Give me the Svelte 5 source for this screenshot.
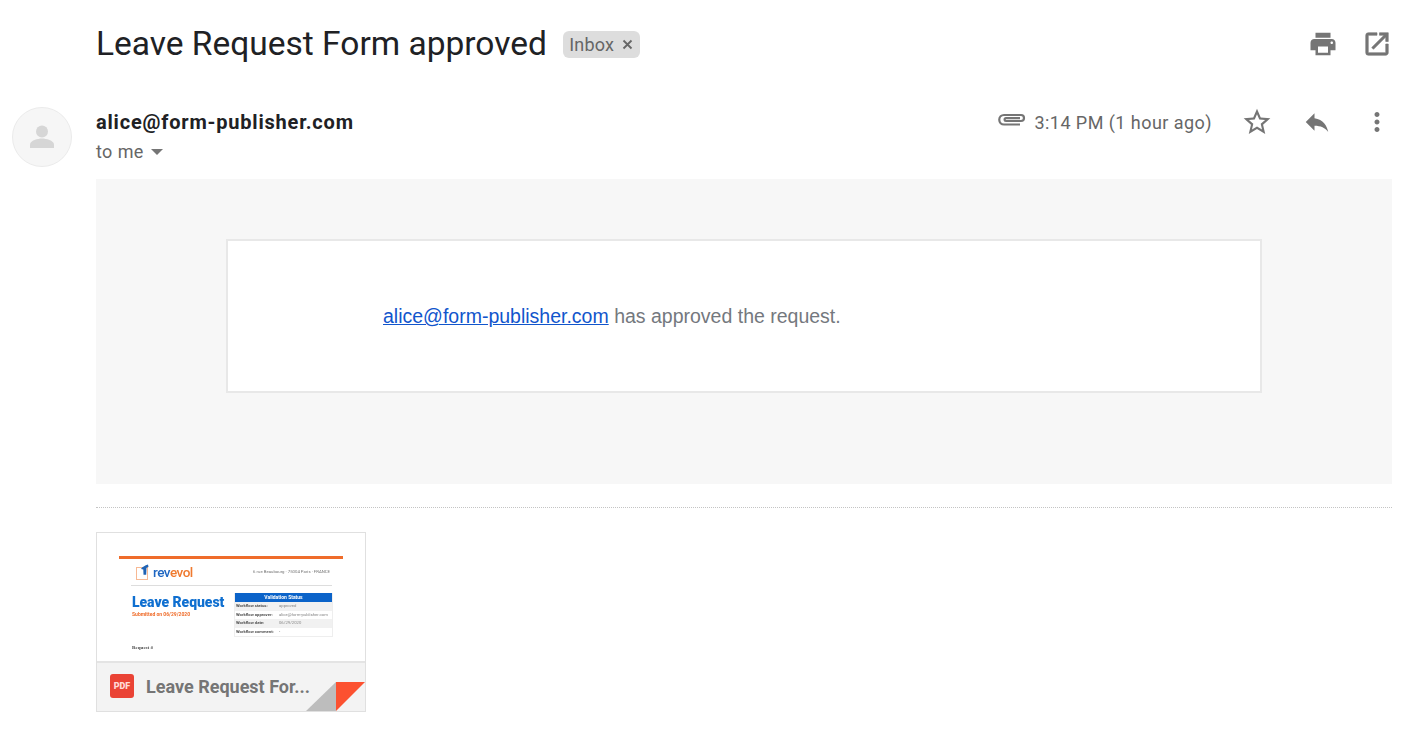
<script>
  const rows = [
    ['Workflow status:', 'approved'],
    ['Workflow approver:', 'alice@form-publisher.com'],
    ['Workflow date:', '06/29/2020'],
    ['Workflow comment:', '-']
  ];
</script>

<div class="page">
  <header class="subject">
    <div class="title">
      <h1>Leave Request Form approved</h1>
      <span class="chip">Inbox
        <svg width="11" height="11" viewBox="0 0 11 11"><path d="M1.500 1.500l8 8M9.500 1.500l-8 8" stroke="#666" stroke-width="1.800" fill="none"/></svg>
      </span>
    </div>
    <div class="subject-actions">
      <svg width="30" height="30" viewBox="0 0 24 24"><path fill="#757575" d="M19 8H5c-1.660 0-3 1.340-3 3v6h4v4h12v-4h4v-6c0-1.660-1.340-3-3-3zm-3 11H8v-5h8v5zm3-7c-.55 0-1-.45-1-1s.45-1 1-1 1 .45 1 1-.45 1-1 1zm-1-9H6v4h12V3z"/></svg>
      <svg width="30" height="30" viewBox="0 0 24 24"><path fill="#757575" stroke="#757575" stroke-width=".5" d="M19 19H5V5h7V3H5a2 2 0 0 0-2 2v14a2 2 0 0 0 2 2h14c1.100 0 2-.9 2-2v-7h-2v7zM14 3v2h3.590l-9.830 9.830 1.410 1.410L19 6.410V10h2V3h-7z"/></svg>
    </div>
  </header>

  <section class="message">
    <div class="avatar">
      <svg width="30" height="30" viewBox="0 0 30 30"><circle cx="15" cy="9.500" r="6" fill="#d6d6d6"/><path fill="#d6d6d6" d="M3 26v-3.500c0-4 8-6 12-6s12 2 12 6V26z"/></svg>
    </div>
    <div class="main">
      <div class="meta">
        <div>
          <div class="sender">alice@form-publisher.com</div>
          <div class="to">to me <span class="caret"></span></div>
        </div>
        <div class="meta-right">
          <svg class="clip" width="30" height="30" viewBox="0 0 30 30"><path fill="none" stroke="#757575" stroke-width="2.200" d="M24 18.500H8A4.750 4.750 0 0 1 8 9H25A3 3 0 0 1 25 15H10A1.400 1.400 0 0 1 10 12.200H24"/></svg>
          <span class="time">3:14 PM (1 hour ago)</span>
          <svg class="star" width="32" height="32" viewBox="0 0 24 24"><path fill="#757575" d="M22 9.240l-7.190-.62L12 2 9.190 8.630 2 9.240l5.460 4.730L5.820 21 12 17.270 18.180 21l-1.630-7.030L22 9.240zM12 15.400l-3.760 2.270 1-4.280-3.320-2.880 4.380-.38L12 6.100l1.710 4.040 4.380.38-3.320 2.880 1 4.280L12 15.400z"/></svg>
          <svg class="reply" width="30" height="30" viewBox="0 0 24 24"><path fill="#757575" d="M10 9V5l-7 7 7 7v-4.100c5 0 8.500 1.600 11 5.100-1-5-4-10-11-11z"/></svg>
          <svg class="more" width="30" height="30" viewBox="0 0 24 24"><path fill="#757575" d="M12 8c1.100 0 2-.9 2-2s-.9-2-2-2-2 .9-2 2 .9 2 2 2zm0 2c-1.100 0-2 .9-2 2s.9 2 2 2 2-.9 2-2-.9-2-2-2zm0 6c-1.100 0-2 .9-2 2s.9 2 2 2 2-.9 2-2-.9-2-2-2z"/></svg>
        </div>
      </div>

      <div class="mail">
        <div class="card">
          <a href="#top">alice@form-publisher.com</a> has approved the request.
        </div>
      </div>

      <hr class="divider" />

      <div class="attachment">
        <div class="preview">
          <div class="doc">
            <div class="bar"></div>
            <div class="brand">
              <div class="logo">
                <svg width="14" height="16" viewBox="0 0 14 16"><rect x=".5" y="3.500" width="11" height="12" fill="#fff" stroke="#f7b994"/><path fill="#1f63b5" d="M5 5c1-2 4-3.500 7-4.500l.5 2.500-2 .8-.3 7H7.500L7.300 5.500z"/></svg>
                <span class="word"><b class="blue">rev</b><b class="orange">evol</b></span>
              </div>
              <span class="addr">6 rue Beaubourg · 75004 Paris · FRANCE</span>
            </div>
            <div class="columns">
              <div class="lead">
                <div class="doc-title">Leave Request</div>
                <div class="doc-sub">Submitted on 06/29/2020</div>
              </div>
              <div class="status">
                <div class="status-head">Validation Status</div>
                {#each rows as [k, v]}
                  <div class="status-row"><b>{k}</b><span>{v}</span></div>
                {/each}
              </div>
            </div>
            <div class="req">Request #</div>
          </div>
        </div>
        <div class="foot">
          <span class="pdf">PDF</span>
          <span class="name">Leave Request For...</span>
          <span class="fold"></span>
          <span class="corner"></span>
        </div>
      </div>
    </div>
  </section>
</div>

<style>
  :global(body) { margin: 0; background: #fff; overflow: hidden; }
  .page { width: 1416px; height: 734px; font-family: Roboto, sans-serif; color: #222; }

  .subject { display: flex; justify-content: space-between; align-items: center; height: 88px; padding: 0 24px 0 96px; box-sizing: border-box; }
  .title { display: flex; align-items: center; gap: 16px; }
  h1 { margin: 0; font-size: 33.500px; font-weight: 400; line-height: 88px; color: #202124; }
  .chip { display: inline-flex; align-items: center; gap: 8px; height: 27px; padding: 0 7px 0 6.500px; background: #ddd; border-radius: 6px; font-size: 18px; color: #666; letter-spacing: .15px; }
  .subject-actions { display: flex; gap: 24px; }

  .message { display: flex; padding: 19px 24px 0 12px; }
  .avatar { width: 58px; height: 58px; margin-right: 24px; flex: none; border-radius: 50%; background: #f6f6f6; border: 1px solid #ebebeb; display: flex; align-items: center; justify-content: center; }
  .main { flex: 1; min-width: 0; }

  .meta { display: flex; justify-content: space-between; height: 72px; }
  .sender { font-size: 20px; font-weight: 700; color: #202124; line-height: 30px; letter-spacing: .8px; }
  .to { font-size: 18px; color: #666; line-height: 30px; display: flex; align-items: center; gap: 7px; letter-spacing: .4px; }
  .caret { border: 6px solid transparent; border-top: 6px solid #757575; border-bottom: 0; }
  .meta-right { display: flex; align-items: flex-start; }
  .clip { margin-right: 8px; margin-top: -1px; }
  .time { font-size: 18px; color: #666; line-height: 32px; margin-right: 29px; letter-spacing: .45px; }
  .star { margin-right: 29px; margin-top: -1px; }
  .reply { margin-right: 30px; }

  .mail { height: 305px; background: #f7f7f7; padding: 60px 130px 0; box-sizing: border-box; }
  .card { height: 154px; box-sizing: border-box; background: #fff; border: 2px solid #e8e8e8; padding: 63px 0 0 155px; font-family: "Liberation Sans", Arial, sans-serif; font-size: 19.500px; line-height: 24px; color: #74787e; }
  .card a { color: #1155cc; }

  .divider { border: 0; border-top: 1px dotted #c4c4c4; margin: 23px 0 24px; }

  .attachment { width: 270px; height: 180px; box-sizing: border-box; border: 1px solid #e0e0e0; position: relative; overflow: hidden; background: #fff; }
  .preview { height: 128px; overflow: hidden; }
  .doc { padding: 23px 22px 0; filter: blur(.6px); color: #555; font-size: 5px; }
  .bar { height: 3px; background: #ef6c2a; }
  .brand { display: flex; justify-content: space-between; align-items: center; height: 25px; margin: 0 11px 0 12px; padding: 0 2px 1px 5px; border-bottom: 1px solid #ddd; }
  .logo { display: flex; align-items: center; gap: 2px; }
  .word { font-size: 13.500px; line-height: 14px; letter-spacing: -.5px; margin-left: 1px; }
  .word b { font-weight: 500; }
  .blue { color: #1e66c2; }
  .orange { color: #ef7a2f; }
  .addr { font-size: 4.300px; white-space: nowrap; color: #777; }
  .columns { display: flex; justify-content: space-between; margin: 7px 10px 0 13px; }
  .doc-title { font-size: 14px; font-weight: 900; line-height: 17px; color: #0f6fd0; margin-top: 1px; letter-spacing: -.05px; }
  .doc-sub { font-size: 5px; line-height: 7px; font-weight: 700; color: #ef6c2a; }
  .status { width: 97px; border: 1px solid #eee; border-top: 0; }
  .status-head { height: 9px; background: #0b63c9; color: #fff; font-size: 5px; line-height: 9px; text-align: center; font-weight: 700; }
  .status-row { display: flex; gap: 5px; height: 8.500px; line-height: 8.500px; font-size: 4.200px; color: #888; white-space: nowrap; padding-left: 1px; overflow: hidden; }
  .status-row:nth-child(even) { background: #f1f1f1; }
  .status-row b { color: #555; font-weight: 700; width: 38px; flex: none; }
  .req { font: 700 5px/8px "Liberation Serif", serif; color: #444; margin: 7px 0 0 13px; }

  .foot { height: 50px; box-sizing: border-box; background: #f3f3f3; border-top: 2px solid #e4e4e4; display: flex; align-items: center; padding: 0 0 2px 13px; gap: 12px; }
  .pdf { width: 24px; height: 24px; border-radius: 3px; background: #ea4335; color: #ffd9d5; font-size: 9px; font-weight: 900; line-height: 24px; text-align: center; }
  .name { font-size: 18px; font-weight: 700; color: #757575; white-space: nowrap; }
  .fold { position: absolute; right: 29px; bottom: 0; width: 0; height: 0; border-style: solid; border-width: 0 0 29px 30px; border-color: transparent transparent #bdbdbd transparent; }
  .corner { position: absolute; right: 0; bottom: 0; width: 29px; height: 29px; background: #fc5130; clip-path: polygon(0 0, 100% 0, 0 100%); }
</style>
